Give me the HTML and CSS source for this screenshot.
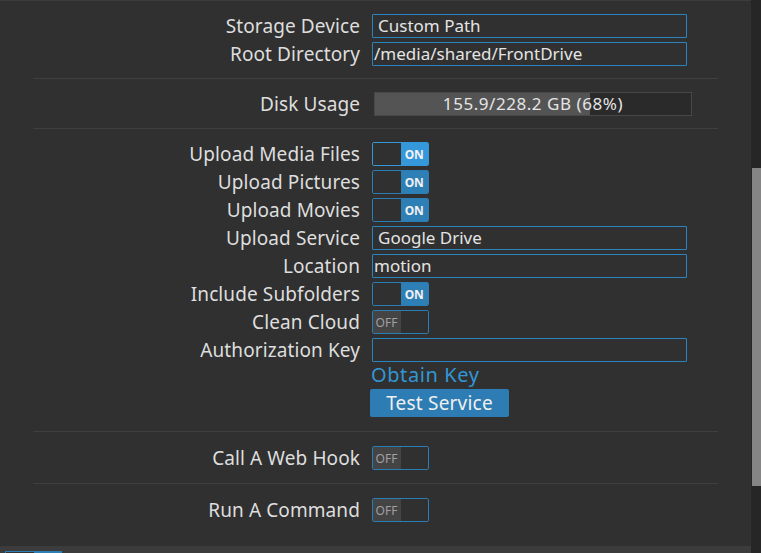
FILE: index.html
```html
<!DOCTYPE html>
<html>
<head>
<meta charset="utf-8">
<link rel="stylesheet" href="styles.css">
</head>
<body>
<div class="app">
  <div class="main">
    <div class="content">
      <div class="section">
        <div class="row"><div class="label">Storage Device</div><div class="field select">Custom Path</div></div>
        <div class="row"><div class="label">Root Directory</div><div class="field input">/media/shared/FrontDrive</div></div>
      </div>
      <div class="section">
        <div class="row"><div class="label">Disk Usage</div>
          <div class="bar"><div class="bar-fill" style="width:68%"></div><div class="bar-text">155.9/228.2 GB (68%)</div></div>
        </div>
      </div>
      <div class="section section-upload">
        <div class="row"><div class="label">Upload Media Files</div><div class="toggle on focus"><span class="t-left"></span><span class="t-right">ON</span></div></div>
        <div class="row"><div class="label">Upload Pictures</div><div class="toggle on"><span class="t-left"></span><span class="t-right">ON</span></div></div>
        <div class="row"><div class="label">Upload Movies</div><div class="toggle on"><span class="t-left"></span><span class="t-right">ON</span></div></div>
        <div class="row"><div class="label">Upload Service</div><div class="field select">Google Drive</div></div>
        <div class="row"><div class="label">Location</div><div class="field input">motion</div></div>
        <div class="row"><div class="label">Include Subfolders</div><div class="toggle on"><span class="t-left"></span><span class="t-right">ON</span></div></div>
        <div class="row"><div class="label">Clean Cloud</div><div class="toggle off"><span class="t-left">OFF</span><span class="t-right"></span></div></div>
        <div class="row"><div class="label">Authorization Key</div><div class="field input"></div></div>
        <div class="row-plain"><a class="link">Obtain Key</a></div>
        <div class="row-plain"><button class="button">Test Service</button></div>
      </div>
      <div class="section section-single">
        <div class="row"><div class="label">Call A Web Hook</div><div class="toggle off"><span class="t-left">OFF</span><span class="t-right"></span></div></div>
      </div>
      <div class="section section-single last">
        <div class="row"><div class="label">Run A Command</div><div class="toggle off"><span class="t-left">OFF</span><span class="t-right"></span></div></div>
      </div>
    </div>
    <div class="footer"><div class="mini-toggle"><span class="mt-left"></span><span class="mt-right"></span></div></div>
  </div>
  <div class="scrollbar"><div class="thumb"></div></div>
</div>
</body>
</html>
```

FILE: styles.css
```css
html, body {
  margin: 0;
  padding: 0;
  background: #303030;
  height: 553px;
  overflow: hidden;
}
body {
  font-family: "Noto Sans", "Open Sans", sans-serif;
  color: #dcdcdc;
}
.app {
  display: flex;
  height: 553px;
}
.main {
  flex: 1;
  display: flex;
  flex-direction: column;
}
.content {
  flex: 1;
  border-top: 1px solid #3c3c3c;
  overflow: hidden;
}
.section {
  margin: 0 33px;
  padding: 11px 0 10px;
  border-bottom: 1px solid #3f3f3f;
}
.section.last {
  border-bottom: none;
}
.section-upload {
  padding-bottom: 14px;
}
.section-single {
  padding: 12px 0 11px;
}
.row {
  display: flex;
  align-items: center;
  height: 28px;
  gap: 12px;
}
.label {
  width: 327px;
  flex: none;
  text-align: right;
  font-size: 19px;
  line-height: 24px;
  color: #dedede;
  white-space: nowrap;
  letter-spacing: 0.1px;
}
.field {
  box-sizing: border-box;
  width: 315px;
  height: 24px;
  border: 1px solid #2b84c0;
  border-radius: 1px;
  font-size: 17px;
  line-height: 22px;
  color: #e4e4e4;
  white-space: nowrap;
}
.field.select {
  padding-left: 5px;
}
.field.input {
  padding-left: 1px;
}
.bar {
  position: relative;
  box-sizing: border-box;
  width: 318px;
  height: 24px;
  margin-left: 2px;
  background: #2a2a2a;
  border: 1px solid #484848;
  display: flex;
}
.bar-fill {
  background: #545454;
  height: 100%;
}
.bar-text {
  position: absolute;
  left: 0;
  right: 0;
  top: 0;
  bottom: 0;
  text-align: center;
  font-size: 17px;
  letter-spacing: 0.55px;
  line-height: 22px;
  color: #e4e4e4;
}
.toggle {
  box-sizing: border-box;
  width: 57px;
  height: 24px;
  border: 1px solid #2a7db5;
  border-radius: 2px;
  display: flex;
  overflow: hidden;
}
.toggle span {
  flex: 1;
  display: flex;
  align-items: center;
  justify-content: center;
  font-size: 12px;
}
.toggle.on .t-left {
  background: #303030;
}
.toggle.on .t-right {
  background: #2e7fb5;
  color: #f2f2f2;
  font-weight: bold;
}
.toggle.focus {
  border-color: #3398d8;
}
.toggle.focus .t-right {
  background: #3498db;
}
.toggle.off {
  border-color: #2a7db5;
}
.toggle.off .t-left {
  background: #444444;
  color: #a0a0a0;
  padding-right: 1px;
}
.toggle.off .t-right {
  background: #303030;
}
.row-plain {
  padding-left: 338px;
}
.link {
  display: block;
  font-size: 20px;
  line-height: 22px;
  color: #3296d6;
  letter-spacing: 0.6px;
}
.button {
  display: block;
  margin-top: 3px;
  margin-left: -1px;
  width: 139px;
  height: 28px;
  border: none;
  border-radius: 2px;
  background: #2d7db4;
  color: #f0f0f0;
  font-family: "Noto Sans", "Open Sans", sans-serif;
  font-size: 19px;
  letter-spacing: 0.2px;
  line-height: 26px;
  padding: 0;
}
.footer {
  height: 7px;
  background: #3c3c3c;
  padding-top: 5px;
  box-sizing: border-box;
}
.mini-toggle {
  margin-left: 5px;
  width: 57px;
  height: 2px;
  display: flex;
  box-sizing: border-box;
  border: 1px solid #2a7db5;
  border-bottom: none;
}
.mt-left {
  flex: 1;
  background: #333;
}
.mt-right {
  flex: 1;
  background: #2e7fb5;
}
.scrollbar {
  width: 10px;
  flex: none;
  background: #262626;
}
.thumb {
  margin-top: 168px;
  margin-left: 1px;
  height: 318px;
  background: #858585;
}
```
